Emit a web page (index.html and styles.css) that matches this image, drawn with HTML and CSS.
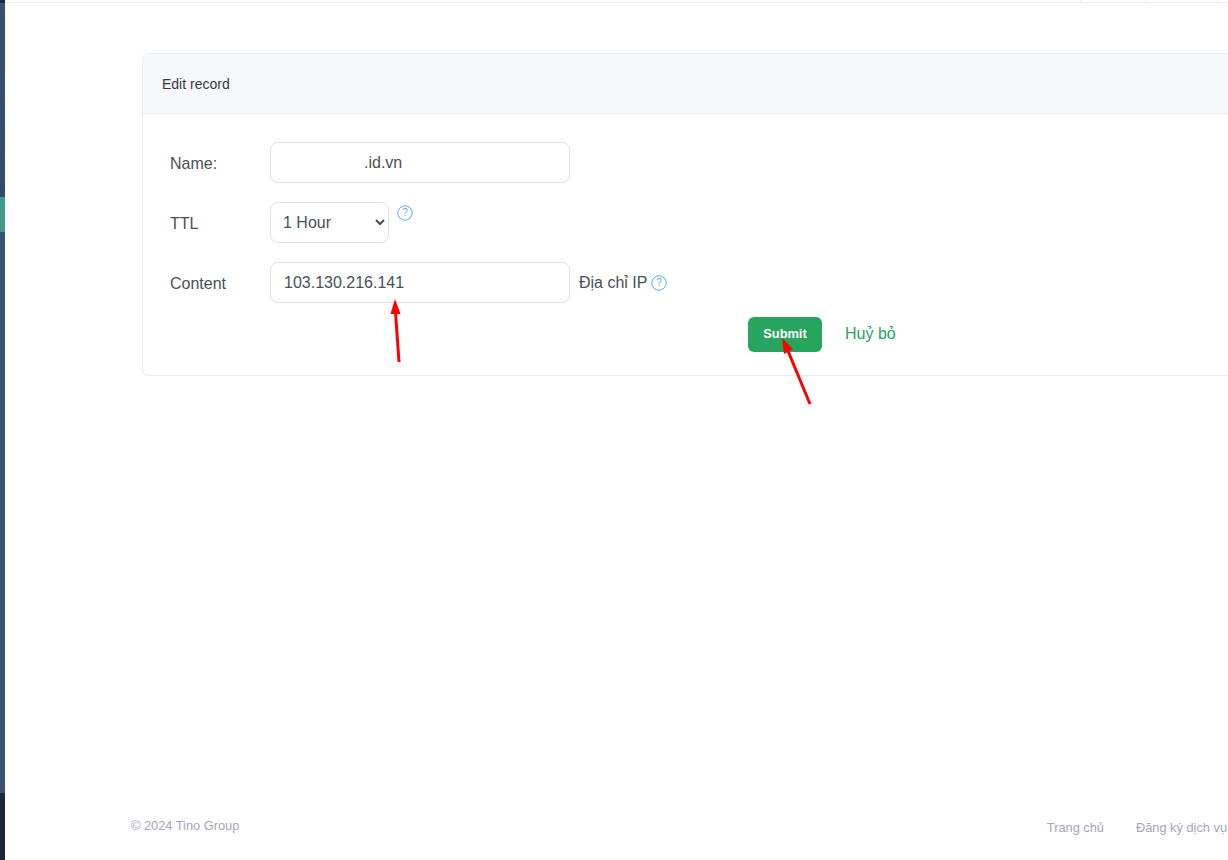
FILE: index.html
```html
<!DOCTYPE html>
<html>
<head>
    <meta charset="UTF-8">
    <title>Edit record</title>
    <link rel="stylesheet" href="styles.css">
</head>
<body>
    <div class="page">
        <aside class="side_bar">
            <div class="side_top"></div>
            <div class="side_menu"></div>
            <div class="side_active"></div>
            <div class="side_menu side_rest"></div>
            <div class="side_bottom"></div>
        </aside>

        <div class="main">
            <div class="top_bar">
                <span class="top_cell top_cell_a"></span>
                <span class="top_cell top_cell_b"></span>
                <span class="top_cell top_cell_c"></span>
            </div>

            <div class="content">
                <div class="card">
                    <div class="card_head">Edit record</div>
                    <form class="card_body">
                        <div class="form_row">
                            <label class="form_label">Name:</label>
                            <input class="form_input form_input_name" type="text" value=".id.vn">
                        </div>
                        <div class="form_row">
                            <label class="form_label">TTL</label>
                            <select class="form_input form_select">
                                <option>1 Hour</option>
                            </select>
                            <svg class="help help_top" viewBox="0 0 16 16"><circle cx="8" cy="8" r="7.2"/><text x="8" y="11.2">?</text></svg>
                        </div>
                        <div class="form_row">
                            <label class="form_label">Content</label>
                            <input class="form_input" type="text" value="103.130.216.141">
                            <span class="form_hint">Địa chỉ IP</span>
                            <svg class="help" viewBox="0 0 16 16"><circle cx="8" cy="8" r="7.2"/><text x="8" y="11.2">?</text></svg>
                        </div>
                        <div class="form_actions">
                            <button class="btn_submit" type="button">Submit</button>
                            <a class="btn_cancel" href="#">Huỷ bỏ</a>
                        </div>
                    </form>
                </div>
            </div>

            <div class="footer">
                <span class="copyright">© 2024 Tino Group</span>
                <div class="footer_links">
                    <a href="#">Trang chủ</a>
                    <a href="#">Đăng ký dịch vụ</a>
                </div>
            </div>
        </div>
    </div>

    <svg class="arrows" viewBox="0 0 1228 860">
        <path class="arrow_line" d="M399 362 L395.5 312"/>
        <path class="arrow_head" d="M395 299 L400.5 314 L390.5 314 Z"/>
        <path class="arrow_line" d="M810 404 L788 351"/>
        <path class="arrow_head" d="M782 338 L793 349 L784 354 Z"/>
    </svg>
</body>
</html>
```

FILE: styles.css
```css
*{
    margin: 0;
    padding: 0;
    box-sizing: border-box;
}
html,body{
    height: 100%;
    overflow: hidden;
}
body{
    background: #fff;
    color: #495057;
    font-family: "Liberation Sans", Arial, sans-serif;
    font-size: 16px;
}
.page{
    display: flex;
    height: 860px;
}

/* sidebar, nearly all of it is off screen */
.side_bar{
    display: flex;
    flex-direction: column;
    flex: 0 0 5px;
}
.side_top{
    height: 3px;
    background: #1e2a3c;
}
.side_menu{
    height: 194px;
    background: linear-gradient(#3a5170, #33496a);
}
.side_active{
    height: 35px;
    background: #419b86;
}
.side_rest{
    height: 561px;
    background: #3a5273;
}
.side_bottom{
    flex: 1;
    background: #1b283a;
}

.main{
    display: flex;
    flex-direction: column;
    flex: 1;
    min-width: 0;
}
.top_bar{
    display: flex;
    justify-content: flex-end;
    height: 3px;
    border-bottom: 1px solid #e9ecef;
}
.top_cell{
    border-left: 1px solid #e9ecef;
}
.top_cell_a{
    width: 65px;
}
.top_cell_b{
    width: 72px;
}
.top_cell_c{
    width: 11px;
}

.content{
    flex: 1;
    padding: 50px 0 0 137px;
}
.card{
    width: 1200px;
    height: 323px;
    border: 1px solid #e9ecef;
    border-radius: 6px;
}
.card_head{
    display: flex;
    align-items: center;
    height: 60px;
    padding-left: 19px;
    background: #f7f8fa;
    border-bottom: 1px solid #e9ecef;
    border-radius: 6px 6px 0 0;
    color: #343a40;
    font-size: 14px;
}
.card_body{
    padding: 28px 0 0 27px;
}
.form_row{
    display: flex;
    align-items: center;
    height: 41px;
    margin-bottom: 19px;
}
.form_label{
    width: 100px;
    margin-top: 2px;
}
.form_input{
    width: 300px;
    height: 41px;
    padding: 0 13px;
    border: 1px solid #dee2e6;
    border-radius: 8px;
    background: #fff;
    color: #495057;
    font-family: inherit;
    font-size: 16px;
}
.form_input_name{
    padding-left: 93px;
}
.form_select{
    width: 119px;
    padding: 0 8px;
}
.form_hint{
    margin-left: 9px;
}
.help{
    width: 16px;
    height: 16px;
    margin-left: 4px;
    fill: none;
    stroke: #5aa9f0;
    stroke-width: 1;
}
.help text{
    fill: #5aa9f0;
    stroke: none;
    font-size: 10px;
    text-anchor: middle;
}
.help_top{
    align-self: flex-start;
    margin: 3px 0 0 8px;
}
.form_actions{
    display: flex;
    align-items: center;
    margin: -5px 0 0 578px;
}
.btn_submit{
    width: 74px;
    height: 35px;
    padding-bottom: 2px;
    border: 0;
    border-radius: 6px;
    background: #27a55f;
    color: #fff;
    font-family: inherit;
    font-size: 12.8px;
    font-weight: bold;
}
.btn_cancel{
    margin: 0 0 2px 23px;
    color: #27a55f;
    text-decoration: none;
}

.footer{
    display: flex;
    justify-content: space-between;
    height: 42px;
    padding: 0 1px 0 126px;
    color: #a3a6bb;
    font-size: 12.8px;
}
.footer_links{
    display: flex;
    gap: 32px;
    padding-top: 2px;
}
.footer_links a{
    color: #a3a6bb;
    text-decoration: none;
}

/* red markup arrows lying over the form */
.arrows{
    position: absolute;
    top: 0;
    left: 0;
    width: 1228px;
    height: 860px;
    pointer-events: none;
}
.arrow_line{
    fill: none;
    stroke: #f00;
    stroke-width: 3;
}
.arrow_head{
    fill: #f00;
}
```
